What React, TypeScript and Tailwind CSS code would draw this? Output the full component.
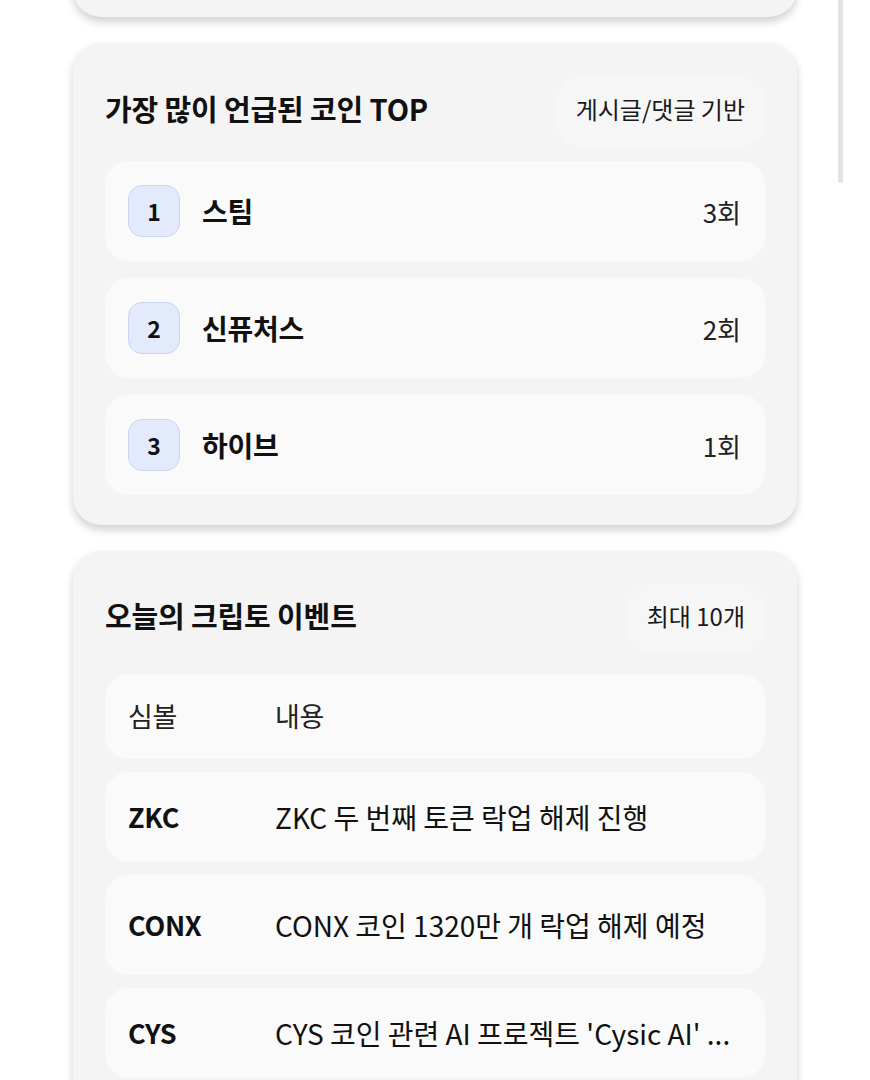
import React from 'react'

type Coin = {
  rank: number
  name: string
  count: number
}

type CryptoEvent = {
  symbol: string
  content: string
  height: string
}

const coins: Coin[] = [
  { rank: 1, name: '스팀', count: 3 },
  { rank: 2, name: '신퓨처스', count: 2 },
  { rank: 3, name: '하이브', count: 1 },
]

const events: CryptoEvent[] = [
  { symbol: 'ZKC', content: 'ZKC 두 번째 토큰 락업 해제 진행', height: 'h-[90px]' },
  { symbol: 'CONX', content: 'CONX 코인 1320만 개 락업 해제 예정', height: 'h-[100px]' },
  { symbol: 'CYS', content: "CYS 코인 관련 AI 프로젝트 'Cysic AI' ...", height: 'h-[90px]' },
]

function CardHeader({ title, badge }: { title: string; badge: string }) {
  return (
    <div className="flex h-[70px] items-center justify-between">
      <h2 className="-mt-[6px] text-[29px] font-bold tracking-[-0.005em] text-[#111]">{title}</h2>
      <span className="flex h-[70px] items-center rounded-[26px] bg-[#f6f6f6] px-5 pb-[6px] text-[24px] text-[#1a1a1a]">
        {badge}
      </span>
    </div>
  )
}

export default function App() {
  return (
    <div
      className="relative min-h-screen overflow-hidden bg-white"
      style={{ fontFamily: '"Noto Sans CJK KR", "Noto Sans", sans-serif' }}
    >
      <div className="absolute right-[27px] top-0 h-[183px] w-[5px] rounded-b bg-[#e3e3e3]" />

      <div className="flex flex-col gap-[26px] pl-[73px] pr-[73px]">
        <div className="-mt-[60px] h-[77px] rounded-b-[28px] bg-[#f4f4f4] shadow-[0_5px_8px_rgba(0,0,0,0.18)]" />

        <section className="rounded-[28px] bg-[#f4f4f4] px-8 pb-[30px] pt-[34px] shadow-[0_5px_8px_rgba(0,0,0,0.18)]">
          <CardHeader title="가장 많이 언급된 코인 TOP" badge="게시글/댓글 기반" />
          <div className="mt-[14px] flex flex-col gap-[17px]">
            {coins.map((coin) => (
              <div
                key={coin.rank}
                className="flex h-[100px] items-center rounded-[24px] bg-[#fafafa] pl-[23px] pr-[24px]"
              >
                <div className="flex h-[52px] w-[52px] items-center justify-center rounded-[14px] border border-[#c8d6f3] bg-[#e2eafb] text-[23px] font-bold text-[#111]">
                  {coin.rank}
                </div>
                <span className="ml-[22px] text-[28px] font-bold tracking-[-0.01em] text-[#111]">{coin.name}</span>
                <span className="ml-auto text-[26px] text-[#222]">{coin.count}회</span>
              </div>
            ))}
          </div>
        </section>

        <section className="rounded-[28px] bg-[#f4f4f4] px-8 pb-[30px] pt-[33px] shadow-[0_5px_8px_rgba(0,0,0,0.18)]">
          <CardHeader title="오늘의 크립토 이벤트" badge="최대 10개" />
          <div className="mt-[20px] flex flex-col gap-[13px]">
            <div className="grid h-[85px] grid-cols-[147px_1fr] items-center rounded-[24px] bg-[#fafafa] pl-[23px] pr-[24px] text-[27px] tracking-[-0.01em] text-[#222]">
              <span>심볼</span>
              <span>내용</span>
            </div>
            {events.map((ev) => (
              <div
                key={ev.symbol}
                className={`grid ${ev.height} grid-cols-[147px_1fr] items-center rounded-[24px] bg-[#fafafa] pl-[23px] pr-[24px] text-[#111]`}
              >
                <span className="text-[27px] font-bold tracking-[-0.01em]">{ev.symbol}</span>
                <span className="whitespace-nowrap text-[28px]">{ev.content}</span>
              </div>
            ))}
          </div>
        </section>
      </div>
    </div>
  )
}
